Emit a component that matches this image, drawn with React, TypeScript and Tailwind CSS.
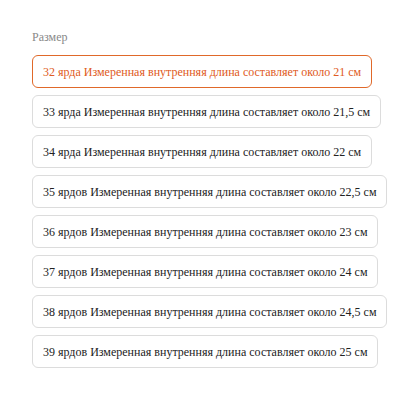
import { useState } from 'react';

const sizes = [
  '32 ярда Измеренная внутренняя длина составляет около 21 см',
  '33 ярда Измеренная внутренняя длина составляет около 21,5 см',
  '34 ярда Измеренная внутренняя длина составляет около 22 см',
  '35 ярдов Измеренная внутренняя длина составляет около 22,5 см',
  '36 ярдов Измеренная внутренняя длина составляет около 23 см',
  '37 ярдов Измеренная внутренняя длина составляет около 24 см',
  '38 ярдов Измеренная внутренняя длина составляет около 24,5 см',
  '39 ярдов Измеренная внутренняя длина составляет около 25 см',
];

export default function App() {
  const [selected, setSelected] = useState(0);

  return (
    <div className="w-[400px] h-[400px] bg-white pl-8 pt-[28px] font-['Liberation_Serif']">
      <div className="text-[12px] text-[#888] mb-[9px]">Размер</div>
      <div className="flex flex-col items-start gap-[7px]">
        {sizes.map((s, i) => (
          <button
            key={s}
            onClick={() => setSelected(i)}
            className={`h-[33px] px-[10px] rounded-[6px] border text-[12px] whitespace-nowrap ${
              selected === i ? 'border-[#e0692a] text-[#e05a22]' : 'border-[#dcdcdc] text-[#222]'
            }`}
          >
            {s}
          </button>
        ))}
      </div>
    </div>
  );
}
